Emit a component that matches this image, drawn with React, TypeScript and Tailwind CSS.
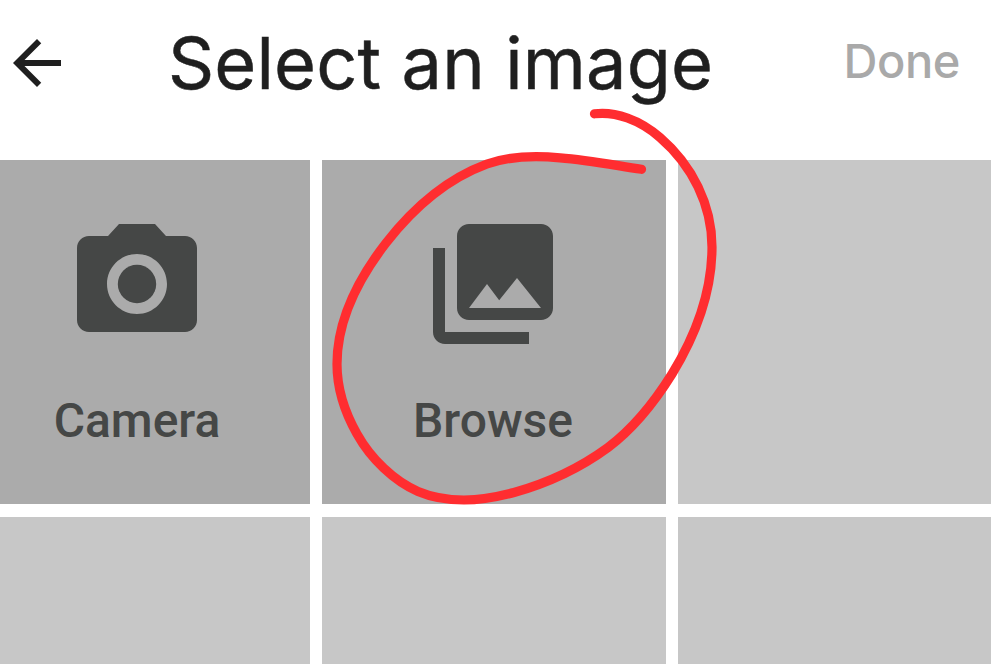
import type { ReactNode } from "react";

function BackArrow() {
  return (
    <svg viewBox="0 0 24 24" className="size-[72px] shrink-0" fill="#1f1f1f">
      <path d="M20 11H7.83l5.59-5.59L12 4l-8 8 8 8 1.41-1.41L7.83 13H20v-2z" />
    </svg>
  );
}

function CameraIcon() {
  return (
    <svg viewBox="0 0 24 24" className="size-36" fill="currentColor">
      <circle cx="12" cy="12" r="3.2" />
      <path d="M9 2L7.17 4H4c-1.1 0-2 .9-2 2v12c0 1.1.9 2 2 2h16c1.1 0 2-.9 2-2V6c0-1.1-.9-2-2-2h-3.17L15 2H9zm3 15c-2.76 0-5-2.24-5-5s2.24-5 5-5 5 2.24 5 5-2.24 5-5 5z" />
    </svg>
  );
}

function CollectionsIcon() {
  return (
    <svg viewBox="0 0 24 24" className="size-36" fill="currentColor">
      <path d="M22 16V4c0-1.1-.9-2-2-2H8c-1.1 0-2 .9-2 2v12c0 1.1.9 2 2 2h12c1.1 0 2-.9 2-2zm-11-4l2.03 2.71L16 11l4 5H8l3-4zM2 6v14c0 1.1.9 2 2 2h14v-2H4V6H2z" />
    </svg>
  );
}

function ActionTile({ icon, label }: { icon: ReactNode; label: string }) {
  return (
    <button className="flex flex-col items-center bg-[#ababab] pt-[52px] text-[#454746]">
      <span className="mr-0.5">{icon}</span>
      <span className="mt-[37px] mr-0.5 font-['Roboto',sans-serif] text-5xl leading-[56px] font-medium">
        {label}
      </span>
    </button>
  );
}

function HandDrawnCircle() {
  return (
    <svg
      viewBox="0 0 991 664"
      className="pointer-events-none absolute inset-0 h-[664px] w-[991px]"
      fill="none"
      stroke="#ff2d30"
      strokeWidth="9.2"
      strokeLinecap="round"
      strokeLinejoin="round"
    >
      <path d="M594.5 113.8C615 111 640 120 660 137.5C692 165 712 205 712 247C712 296 694 338 672 374C652 406 630 431 608 447.5C580 468 548 483 514 492.5C497 497 480 500 464 500C447 500 431 497 418 491.5C394 481 371 459 357 434C344 411 337 387 337 364C337 325 355 283 386 243C414 207 449 178 487 164C510 156 537 155.5 560 157.8C588 160 613 165 641.5 169.3" />
    </svg>
  );
}

export default function App() {
  return (
    <div className="relative h-[664px] w-[991px] overflow-hidden bg-white">
      <header className="flex h-40 items-start pl-px">
        <div className="pt-[27px]">
          <BackArrow />
        </div>
        <h1 className="ml-[95px] pt-[19px] font-['Inter',sans-serif] text-[72px] leading-[88px] font-normal tracking-[0.15px] whitespace-nowrap text-[#1f1f1f] [-webkit-text-stroke:0.5px_#1f1f1f]">
          Select an image
        </h1>
        <button className="mr-[31px] ml-auto pt-8 font-['Inter',sans-serif] text-[47px] leading-[58px] font-medium tracking-[-0.4px] text-[#a9a9a9]">
          Done
        </button>
      </header>
      <main className="-ml-[34px] grid w-[1056px] grid-cols-[344px_344px_344px] grid-rows-[344px_344px] gap-x-3 gap-y-[13px]">
        <ActionTile icon={<CameraIcon />} label="Camera" />
        <ActionTile icon={<CollectionsIcon />} label="Browse" />
        <div className="bg-[#c7c7c7]" />
        <div className="bg-[#c7c7c7]" />
        <div className="bg-[#c7c7c7]" />
        <div className="bg-[#c7c7c7]" />
      </main>
      <HandDrawnCircle />
    </div>
  );
}
